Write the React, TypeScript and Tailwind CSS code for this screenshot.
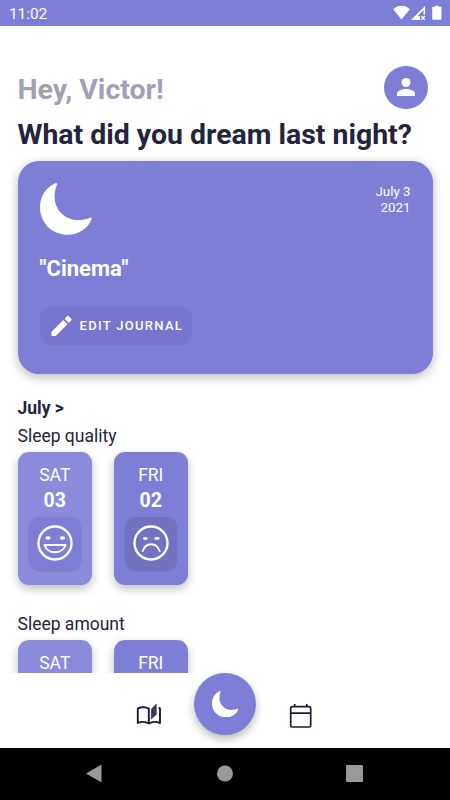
import React from "react";

interface IconProps {
  className?: string;
}

interface DayCardProps {
  day: string;
  date: string;
  light?: boolean;
  mood: "happy" | "sad";
}

const MoonIcon = ({ className }: IconProps) => (
  <svg viewBox="0 0 52 52" className={className} fill="currentColor">
    <path d="M15.3.2C6 4.2 0 13.6 0 24c0 16 12 27.8 28.2 27.8 10.3 0 19.500-6 23.400-15.500.5-1.500-.3-2.100-1.600-1.600C46.400 36 42.200 37.100 38 37.100 25 37.100 14.600 26.800 14.600 14c0-4.300.700-8.200 2.200-12C17.300.6 16.600-.300 15.300.2z" />
  </svg>
);

const MoodIcon = ({ mood }: { mood: "happy" | "sad" }) => (
  <svg
    viewBox="0 0 36 36"
    className="h-9 w-9"
    fill="none"
    stroke="white"
    strokeWidth="2.300"
    strokeLinecap="round"
    strokeLinejoin="round"
  >
    <circle cx="18" cy="18" r="16.500" />
    {mood === "happy" ? (
      <>
        <path d="M7.300 20h21.400c-2 4.700-5.700 7.300-10.700 7.300S9.300 24.700 7.300 20z" strokeWidth="1.900" />
        <ellipse cx="11" cy="13" rx="2.700" ry="1.800" fill="white" stroke="none" />
        <ellipse cx="25.500" cy="13" rx="2.700" ry="1.800" fill="white" stroke="none" />
      </>
    ) : (
      <>
        <path d="M9.700 26c1.600-4.600 4.500-6.800 8.300-6.800s6.900 2.200 8.700 6.800" strokeWidth="1.900" />
        <ellipse cx="12.300" cy="13.500" rx="2.300" ry="1.400" fill="white" stroke="none" />
        <ellipse cx="24" cy="13.500" rx="2.700" ry="1.400" fill="white" stroke="none" />
      </>
    )}
  </svg>
);

const StatusBar = () => (
  <div className="flex h-[26px] shrink-0 items-center justify-between bg-[#7f7ed7] pr-[7px] pl-[9px] text-white">
    <span className="pt-0.5 text-[15.500px] leading-5 tracking-[-0.100px]">11:02</span>
    <svg width="50" height="16" viewBox="0 0 50 16" fill="white">
      <path d="M0.200 4.200C5-.400 12-.400 16.800 4.200L8.500 14.500z" />
      <path fillRule="evenodd" d="M32 1v8.500h-1.500V4.700l-6 6.500h2.500V15H18z" />
      <path d="m28.300 11 3.500 3.800m0-3.800-3.500 3.800" stroke="white" strokeWidth="1.200" />
      <path d="M42 1.700V.800h3.500v.900h1.700c.8 0 1.300.5 1.300 1.300v10.500c0 .8-.5 1.300-1.300 1.300h-6.700c-.8 0-1.300-.5-1.300-1.300V3c0-.8.500-1.300 1.300-1.300z" />
    </svg>
  </div>
);

const DayCard = ({ day, date, light = false, mood }: DayCardProps) => (
  <div
    className={`flex h-[133.500px] w-[74.500px] shrink-0 flex-col items-center rounded-[11px] pt-[11.500px] text-white shadow-[0_4px_10px_rgba(0,0,0,0.25)] ${
      light ? "bg-[#8c8ada]" : "bg-[#7f7ed7]"
    }`}
  >
    <span className="text-[17.500px] leading-6">{day}</span>
    <span className="mt-[1.500px] text-[19.500px] leading-6 font-bold">{date}</span>
    <div
      className={`mt-1 flex h-[53px] w-[52.500px] items-center justify-center rounded-[11px] shadow-[0_1px_2px_rgba(0,0,0,0.15)] ${
        light ? "bg-[#7f7ed7]" : "bg-[#7372c1]"
      }`}
    >
      <MoodIcon mood={mood} />
    </div>
  </div>
);

// Top edge of a card that continues under the bottom nav
const PeekCard = ({ day, light = false }: { day: string; light?: boolean }) => (
  <div
    className={`flex h-[34px] w-[74.500px] shrink-0 justify-center rounded-t-[11px] pt-[11.500px] text-white shadow-[0_4px_10px_rgba(0,0,0,0.25)] ${
      light ? "bg-[#8c8ada]" : "bg-[#7f7ed7]"
    }`}
  >
    <span className="text-[17.500px] leading-6">{day}</span>
  </div>
);

const BottomNav = () => (
  <nav className="relative h-[74.500px] shrink-0 bg-white text-[#1b1a38]">
    <svg className="absolute top-[30px] left-[136px]" width="26" height="26" viewBox="0 0 26 26">
      <path
        d="M12.800 20.500V5.600C10 4 5 3.700 1.800 5.600V20c3.500-1.500 8-1.300 11 .5 3-1.800 7.500-2 11.200-.5V5.500L22.700 4.500"
        fill="none"
        stroke="currentColor"
        strokeWidth="1.900"
        strokeLinejoin="round"
      />
      <path d="m15.300 6 5-5v10.500l-5 4.500z" fill="#3b3a52" stroke="currentColor" strokeWidth=".5" />
    </svg>
    <div className="absolute top-0 left-[194.300px] flex h-[61.500px] w-[61.500px] items-center justify-center rounded-full bg-[#7f7ed7] text-white shadow-[0_4px_8px_rgba(0,0,0,0.28)]">
      <MoonIcon className="h-[26.500px] w-[26.500px]" />
    </div>
    <svg
      className="absolute top-[30px] left-[289px]"
      width="24"
      height="26"
      viewBox="0 0 24 26"
      fill="none"
      stroke="currentColor"
      strokeWidth="1.700"
    >
      <rect x="1.700" y="3.700" width="20" height="20.300" rx="1.500" />
      <path d="M1.700 10.200h20M5.700 1v3M17.800 1v3" />
    </svg>
  </nav>
);

const App = () => {
  return (
    <div className="flex h-[800px] w-[450px] flex-col overflow-hidden bg-white font-[Roboto,sans-serif] text-[#24243c]">
      <StatusBar />
      <main className="h-[647px] shrink-0 overflow-hidden px-[17.500px]">
        <div className="flex h-[84px] items-end justify-between pr-[5px]">
          <h2 className="pb-0.5 text-[28.500px] leading-9 font-bold text-[#a0a1b4]">Hey, Victor!</h2>
          <div className="mb-px flex h-[43.500px] w-[43.500px] items-center justify-center rounded-full bg-[#7f7ed7]">
            <svg width="18" height="18" viewBox="0 0 18 18" fill="white">
              <circle cx="9" cy="4.500" r="4.500" />
              <path d="M0 18v-2.200C0 12.600 5.500 11 9 11s9 1.600 9 4.800V18z" />
            </svg>
          </div>
        </div>
        <h1 className="mt-[7px] text-[28.450px] leading-9 font-bold whitespace-nowrap">What did you dream last night?</h1>

        <section className="mt-[8px] flex h-[212.500px] justify-between rounded-[21px] bg-[#7f7ed7] px-[22px] pt-[22px] text-white shadow-[0_3px_11px_rgba(0,0,0,0.28)]">
          <div>
            <MoonIcon className="h-[52px] w-[52px]" />
            <p className="mt-5 text-[22px] leading-7 font-bold">"Cinema"</p>
            <button className="mt-[23px] flex h-[39px] w-[152px] items-center rounded-[12px] bg-[#7775cd] pl-[11px]">
              <svg width="22" height="22" viewBox="0 0 22 22" fill="white">
                <path d="M.500 16.800v4.200h4.200L16.500 9.200l-4.200-4.200zM20.300 5.400c.5-.5.5-1.200 0-1.700l-2.500-2.500c-.5-.5-1.200-.5-1.700 0l-2.500 2.500 4.200 4.200z" />
              </svg>
              <span className="ml-[7px] text-[13px] font-medium tracking-[1.300px] whitespace-nowrap">EDIT JOURNAL</span>
            </button>
          </div>
          <p className="pt-px text-right text-[13.300px] leading-[15.500px]">
            July 3
            <br />
            2021
          </p>
        </section>

        <h3 className="mt-[22.500px] text-[17.500px] leading-6 font-bold">July &gt;</h3>
        <p className="mt-1 text-[17.500px] leading-6">Sleep quality</p>
        <div className="mt-[3.500px] flex gap-[21.500px]">
          <DayCard day="SAT" date="03" light mood="happy" />
          <DayCard day="FRI" date="02" mood="sad" />
        </div>
        <p className="mt-[27px] text-[17.500px] leading-6">Sleep amount</p>
        <div className="mt-[3.500px] flex gap-[21.500px]">
          <PeekCard day="SAT" light />
          <PeekCard day="FRI" />
        </div>
      </main>
      <BottomNav />
      <div className="flex h-[52.500px] shrink-0 items-center bg-black">
        <svg width="450" height="51" viewBox="0 0 450 51" fill="#999">
          <path d="M86 25.500 101.500 16.500v18z" />
          <circle cx="225" cy="25.500" r="8" />
          <rect x="346" y="17" width="17" height="17" rx="1" />
        </svg>
      </div>
    </div>
  );
};

export default App;
